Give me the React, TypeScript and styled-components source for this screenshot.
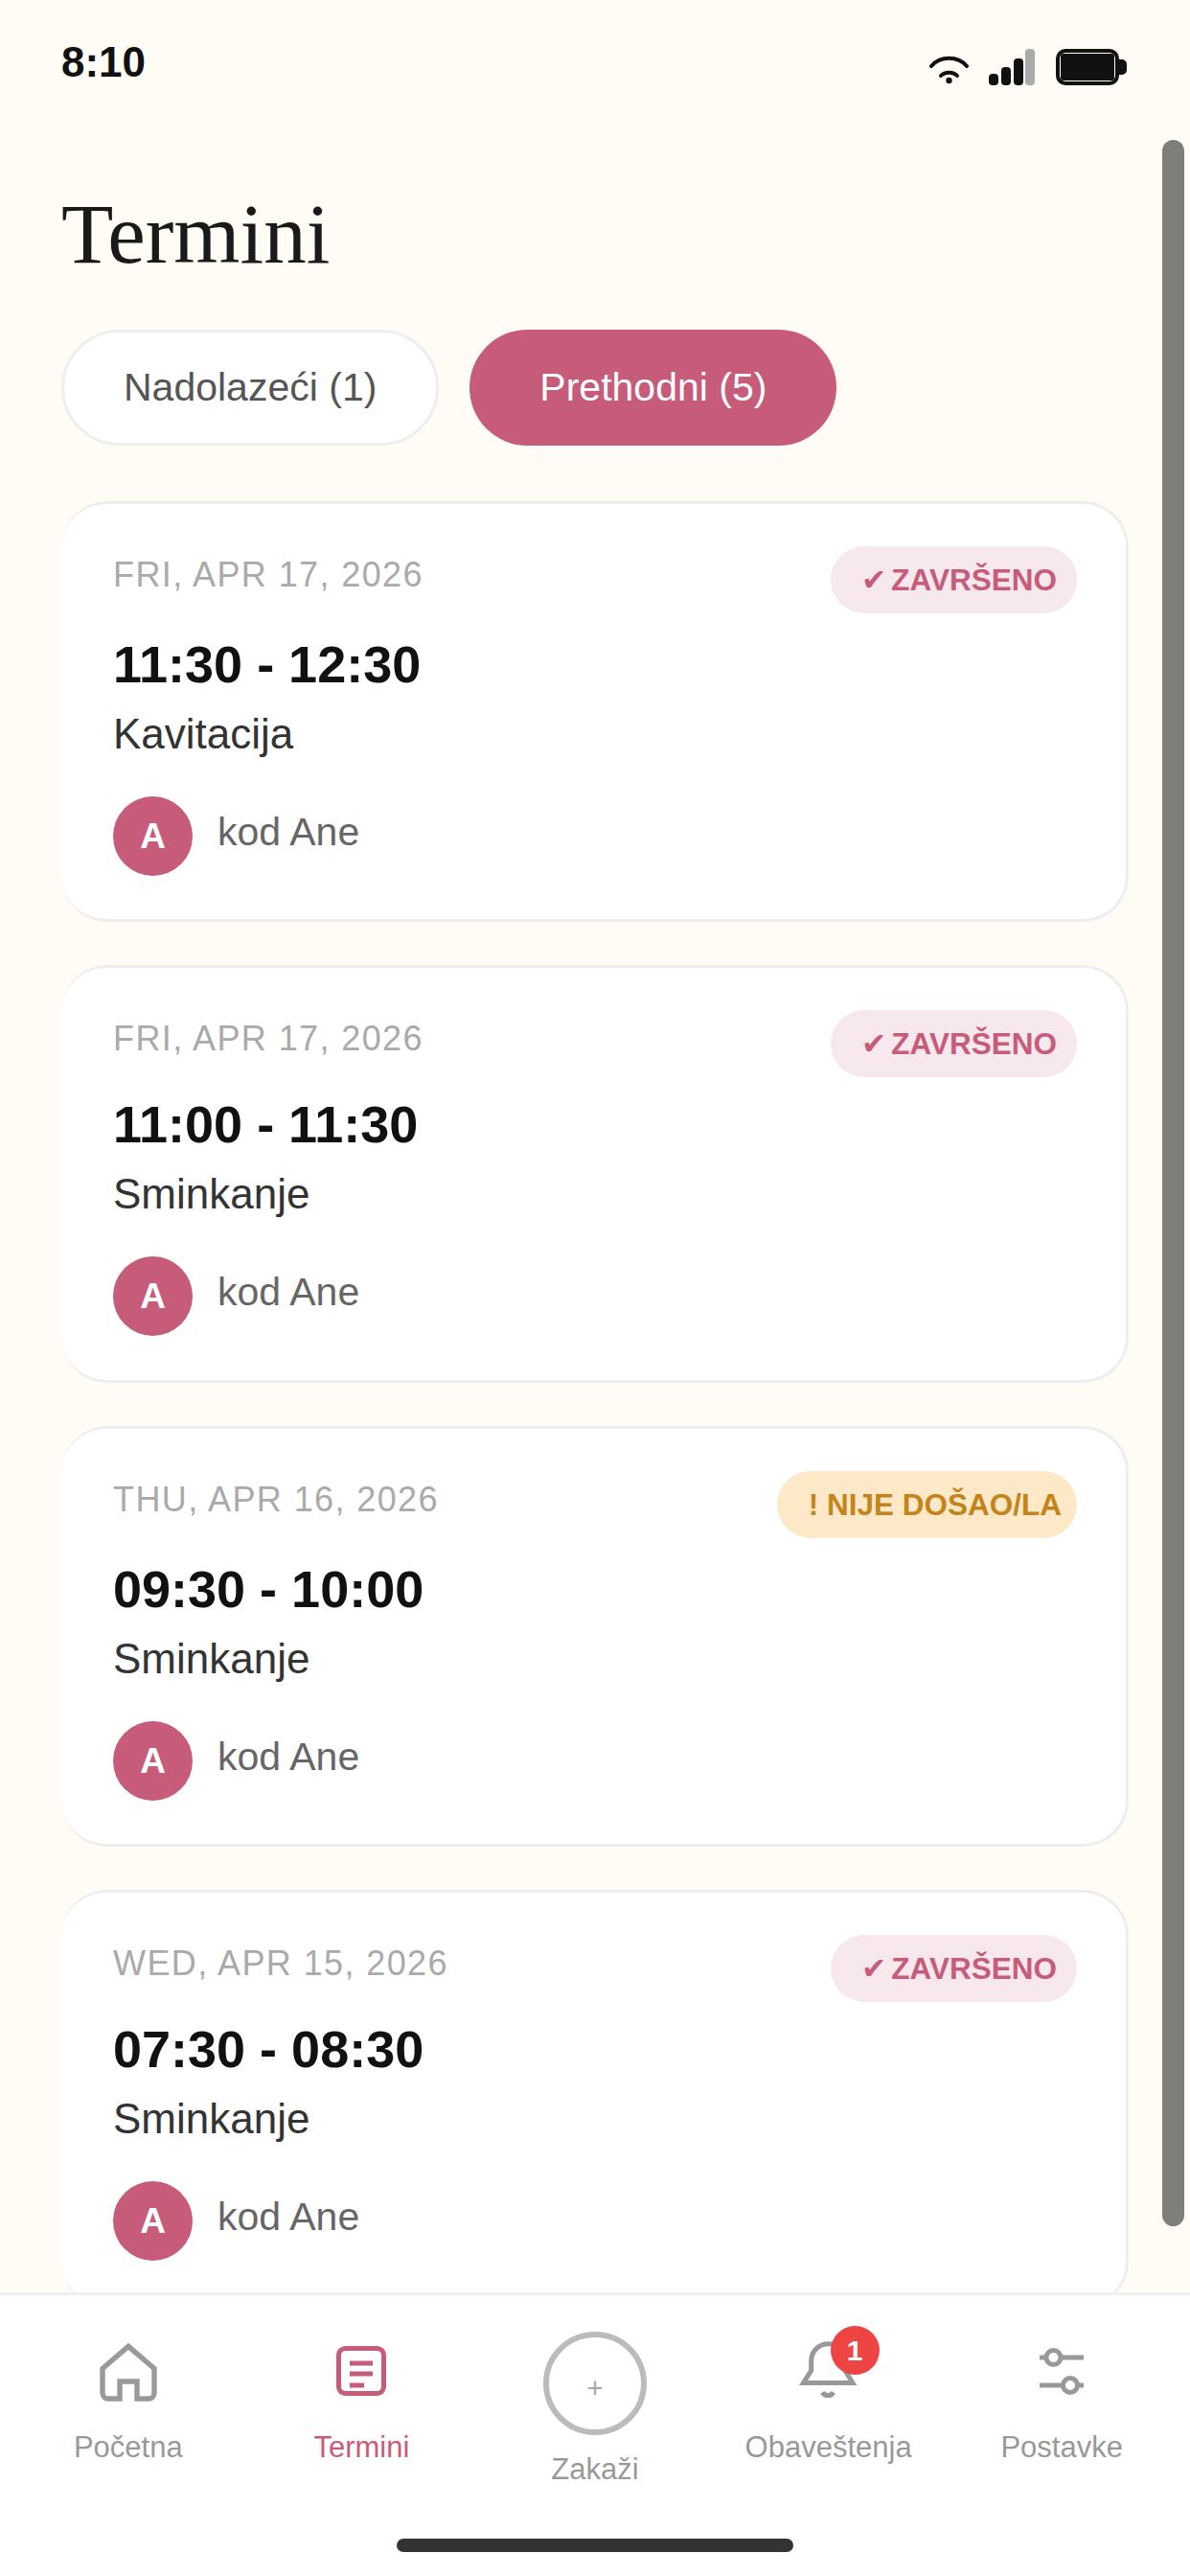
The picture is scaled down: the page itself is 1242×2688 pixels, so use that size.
import React from 'react';
import styled, { createGlobalStyle } from 'styled-components';

const PINK = '#c75b7a';
const SANS = '"Liberation Sans", Arial, sans-serif';

const GlobalStyle = createGlobalStyle`
  html, body {
    margin: 0;
    padding: 0;
    background: #fffcf5;
  }
  * {
    box-sizing: border-box;
  }
`;

const Screen = styled.div`
  position: relative;
  width: 1242px;
  height: 2688px;
  overflow: hidden;
  display: flex;
  flex-direction: column;
  background: #fffcf5;
  font-family: ${SANS};
`;

const StatusBar = styled.div`
  flex: none;
  height: 132px;
  padding: 40px 65px 0 64px;
  display: flex;
  justify-content: space-between;
  align-items: flex-start;
`;

const Clock = styled.span`
  font-size: 44px;
  line-height: 50px;
  font-weight: 700;
  color: #111;
`;

const StatusIcons = styled.div`
  display: flex;
  align-items: flex-start;
  margin-top: 11px;
`;

const Content = styled.main`
  flex: 1;
  min-height: 0;
  overflow: hidden;
  padding: 62px 64px 0;
`;

const Title = styled.h1`
  margin: 0;
  font-family: "Liberation Serif", "Times New Roman", serif;
  font-size: 89px;
  line-height: 100px;
  font-weight: 400;
  color: #1a1a1a;
`;

const Tabs = styled.div`
  display: flex;
  gap: 32px;
  margin-top: 50px;
`;

const Tab = styled.button<{ $active?: boolean }>`
  height: 121px;
  padding: 0 ${(p) => (p.$active ? '73px' : '62px')};
  border-radius: 61px;
  border: ${(p) => (p.$active ? '0' : '3px solid #eeeeee')};
  background: ${(p) => (p.$active ? PINK : '#fff')};
  color: ${(p) => (p.$active ? '#fff' : '#555')};
  font-family: ${SANS};
  font-size: 41px;
`;

const CardList = styled.div`
  display: flex;
  flex-direction: column;
  gap: 45px;
  margin-top: 58px;
`;

const Card = styled.article<{ $tight?: boolean }>`
  height: ${(p) => (p.$tight ? '436px' : '439px')};
  flex: none;
  padding: 44px 51px 0 54px;
  background: #fff;
  border: 3px solid #eeeeee;
  border-left: 0;
  border-radius: 48px;
`;

const CardTop = styled.div`
  display: flex;
  justify-content: space-between;
  align-items: flex-start;
`;

const DateText = styled.span`
  margin-top: 10px;
  font-size: 36px;
  line-height: 40px;
  letter-spacing: 1.4px;
  color: #aaaaaa;
`;

const Badge = styled.span<{ $tone: 'done' | 'missed' }>`
  height: 70px;
  padding: ${(p) => (p.$tone === 'done' ? '0 21px 0 32px' : '0 16px 0 33px')};
  display: inline-flex;
  align-items: center;
  border-radius: 35px;
  font-size: 31.5px;
  font-weight: 700;
  background: ${(p) => (p.$tone === 'done' ? '#f7e8ed' : '#fde8c8')};
  color: ${(p) => (p.$tone === 'done' ? PINK : '#c4841a')};
`;

const BadgeMark = styled.span`
  margin-right: 5px;
  font-family: "DejaVu Sans", sans-serif;
  font-weight: 700;
`;

const TimeRange = styled.div<{ $tight?: boolean }>`
  margin-top: ${(p) => (p.$tight ? '18px' : '22px')};
  font-size: 54px;
  line-height: 62px;
  font-weight: 700;
  color: #111;
`;

const Service = styled.div`
  margin-top: 15px;
  font-size: 44px;
  line-height: 54px;
  color: #333;
`;

const Staff = styled.div`
  display: flex;
  align-items: center;
  gap: 26px;
  margin-top: 38px;
`;

const Avatar = styled.div`
  width: 83px;
  height: 83px;
  border-radius: 50%;
  display: flex;
  align-items: center;
  justify-content: center;
  background: ${PINK};
  color: #fff;
  font-size: 37px;
  font-weight: 700;
`;

const StaffName = styled.span`
  margin-top: -8px;
  font-size: 41px;
  color: #666;
`;

const ScrollThumb = styled.div`
  position: absolute;
  top: 146px;
  left: 1213px;
  width: 23px;
  height: 2177px;
  border-radius: 12px;
  background: #7f7f7a;
`;

const Nav = styled.nav`
  flex: none;
  height: 296px;
  padding: 0 12px;
  display: grid;
  grid-template-columns: repeat(5, 1fr);
  background: #fff;
  border-top: 3px solid #f0f0f0;
`;

const NavItem = styled.div<{ $active?: boolean }>`
  display: flex;
  flex-direction: column;
  align-items: center;
  padding-top: 45px;
  color: ${(p) => (p.$active ? PINK : '#999')};
`;

const IconWrap = styled.div`
  position: relative;
  width: 72px;
  height: 72px;
  display: flex;
  align-items: center;
  justify-content: center;
`;

const NavLabel = styled.span`
  margin-top: 24px;
  font-size: 31px;
  line-height: 36px;
`;

const BookItem = styled(NavItem)`
  padding-top: 38px;
`;

const BookCircle = styled.div`
  width: 108px;
  height: 108px;
  border-radius: 50%;
  border: 6px solid #bbbbbb;
  display: flex;
  align-items: center;
  justify-content: center;
  padding-top: 9px;
  font-size: 30px;
  color: #aaa;
`;

const BookLabel = styled(NavLabel)`
  margin-top: 18px;
`;

const NotifBadge = styled.span`
  position: absolute;
  top: -13px;
  left: 38px;
  width: 51px;
  height: 51px;
  border-radius: 50%;
  display: flex;
  align-items: center;
  justify-content: center;
  background: #ef4444;
  color: #fff;
  font-size: 30px;
  font-weight: 700;
`;

const HomeBar = styled.div`
  position: absolute;
  left: 414px;
  top: 2649px;
  width: 414px;
  height: 14px;
  border-radius: 7px;
  background: #333;
`;

const StatusGlyphs = () => (
  <svg width="207" height="38" viewBox="0 0 207 38">
    <g fill="none" stroke="#111" strokeLinecap="round" strokeWidth="4">
      <path d="M2 18C11 7 30 7 39 18" />
      <path d="M12 28C16 23.5 25 23.5 29 28" />
    </g>
    <circle cx="20.5" cy="33" r="3.2" fill="#111" />
    <rect x="62" y="26" width="10" height="12" rx="4" fill="#111" />
    <rect x="75" y="19" width="10" height="19" rx="4" fill="#111" />
    <rect x="88" y="10" width="10" height="28" rx="4" fill="#111" />
    <rect x="100" y="0" width="10" height="38" rx="4" fill="#aaa" />
    <rect x="134" y="2" width="62" height="34" rx="8" fill="#fffcf5" stroke="#111" strokeWidth="4" />
    <rect x="137" y="5" width="56" height="28" rx="3" fill="#111" />
    <path d="M198 11h3a5 5 0 0 1 5 5v6a5 5 0 0 1-5 5h-3z" fill="#111" />
  </svg>
);

const HomeIcon = () => (
  <svg width="72" height="72" viewBox="0 0 24 24" fill="none" stroke="currentColor" strokeWidth="1.8">
    <path d="M3 10.5 12 2.8l9 7.7V19a2 2 0 0 1-2 2h-4v-6H9v6H5a2 2 0 0 1-2-2z" />
  </svg>
);

const ListIcon = () => (
  <svg width="72" height="72" viewBox="0 0 72 72" fill="none" stroke="currentColor" strokeWidth="5">
    <rect x="12.5" y="10.5" width="47" height="47" rx="7" />
    <path d="M24 26h24M24 37h24M24 49h15" />
  </svg>
);

const BellIcon = () => (
  <svg width="72" height="72" viewBox="0 0 24 24" fill="none" stroke="currentColor" strokeWidth="1.7">
    <path d="M5.9 7.8a5.9 5.9 0 0 1 11.8 0v3.4l2.6 4.3H3.2l2.7-4.3z" />
    <path d="M9.8 18.8a2.2 2.2 0 0 0 3.8 0" />
  </svg>
);

const SlidersIcon = () => (
  <svg width="72" height="72" viewBox="0 0 72 72" fill="none" stroke="currentColor" strokeWidth="5">
    <path d="M13 20h7M35 20h24M13 49h24M52 49h7" />
    <circle cx="27.5" cy="20" r="7.5" />
    <circle cx="45" cy="49" r="7.5" />
  </svg>
);

type Appointment = {
  date: string;
  time: string;
  service: string;
  status: 'done' | 'missed';
  tight?: boolean;
};

const APPOINTMENTS: Appointment[] = [
  { date: 'FRI, APR 17, 2026', time: '11:30 - 12:30', service: 'Kavitacija', status: 'done' },
  { date: 'FRI, APR 17, 2026', time: '11:00 - 11:30', service: 'Sminkanje', status: 'done', tight: true },
  { date: 'THU, APR 16, 2026', time: '09:30 - 10:00', service: 'Sminkanje', status: 'missed' },
  { date: 'WED, APR 15, 2026', time: '07:30 - 08:30', service: 'Sminkanje', status: 'done', tight: true },
];

function App() {
  return (
    <Screen>
      <GlobalStyle />
      <StatusBar>
        <Clock>8:10</Clock>
        <StatusIcons>
          <StatusGlyphs />
        </StatusIcons>
      </StatusBar>
      <Content>
        <Title>Termini</Title>
        <Tabs>
          <Tab>Nadolazeći (1)</Tab>
          <Tab $active>Prethodni (5)</Tab>
        </Tabs>
        <CardList>
          {APPOINTMENTS.map((a) => (
            <Card key={a.date + a.time} $tight={a.tight}>
              <CardTop>
                <DateText>{a.date}</DateText>
                <Badge $tone={a.status}>
                  {a.status === 'done' ? (
                    <>
                      <BadgeMark>✔</BadgeMark>ZAVRŠENO
                    </>
                  ) : (
                    '! NIJE DOŠAO/LA'
                  )}
                </Badge>
              </CardTop>
              <TimeRange $tight={a.tight}>{a.time}</TimeRange>
              <Service>{a.service}</Service>
              <Staff>
                <Avatar>A</Avatar>
                <StaffName>kod Ane</StaffName>
              </Staff>
            </Card>
          ))}
        </CardList>
      </Content>
      <Nav>
        <NavItem>
          <IconWrap>
            <HomeIcon />
          </IconWrap>
          <NavLabel>Početna</NavLabel>
        </NavItem>
        <NavItem $active>
          <IconWrap>
            <ListIcon />
          </IconWrap>
          <NavLabel>Termini</NavLabel>
        </NavItem>
        <BookItem>
          <BookCircle>+</BookCircle>
          <BookLabel>Zakaži</BookLabel>
        </BookItem>
        <NavItem>
          <IconWrap>
            <BellIcon />
            <NotifBadge>1</NotifBadge>
          </IconWrap>
          <NavLabel>Obaveštenja</NavLabel>
        </NavItem>
        <NavItem>
          <IconWrap>
            <SlidersIcon />
          </IconWrap>
          <NavLabel>Postavke</NavLabel>
        </NavItem>
      </Nav>
      <ScrollThumb />
      <HomeBar />
    </Screen>
  );
}

export default App;
